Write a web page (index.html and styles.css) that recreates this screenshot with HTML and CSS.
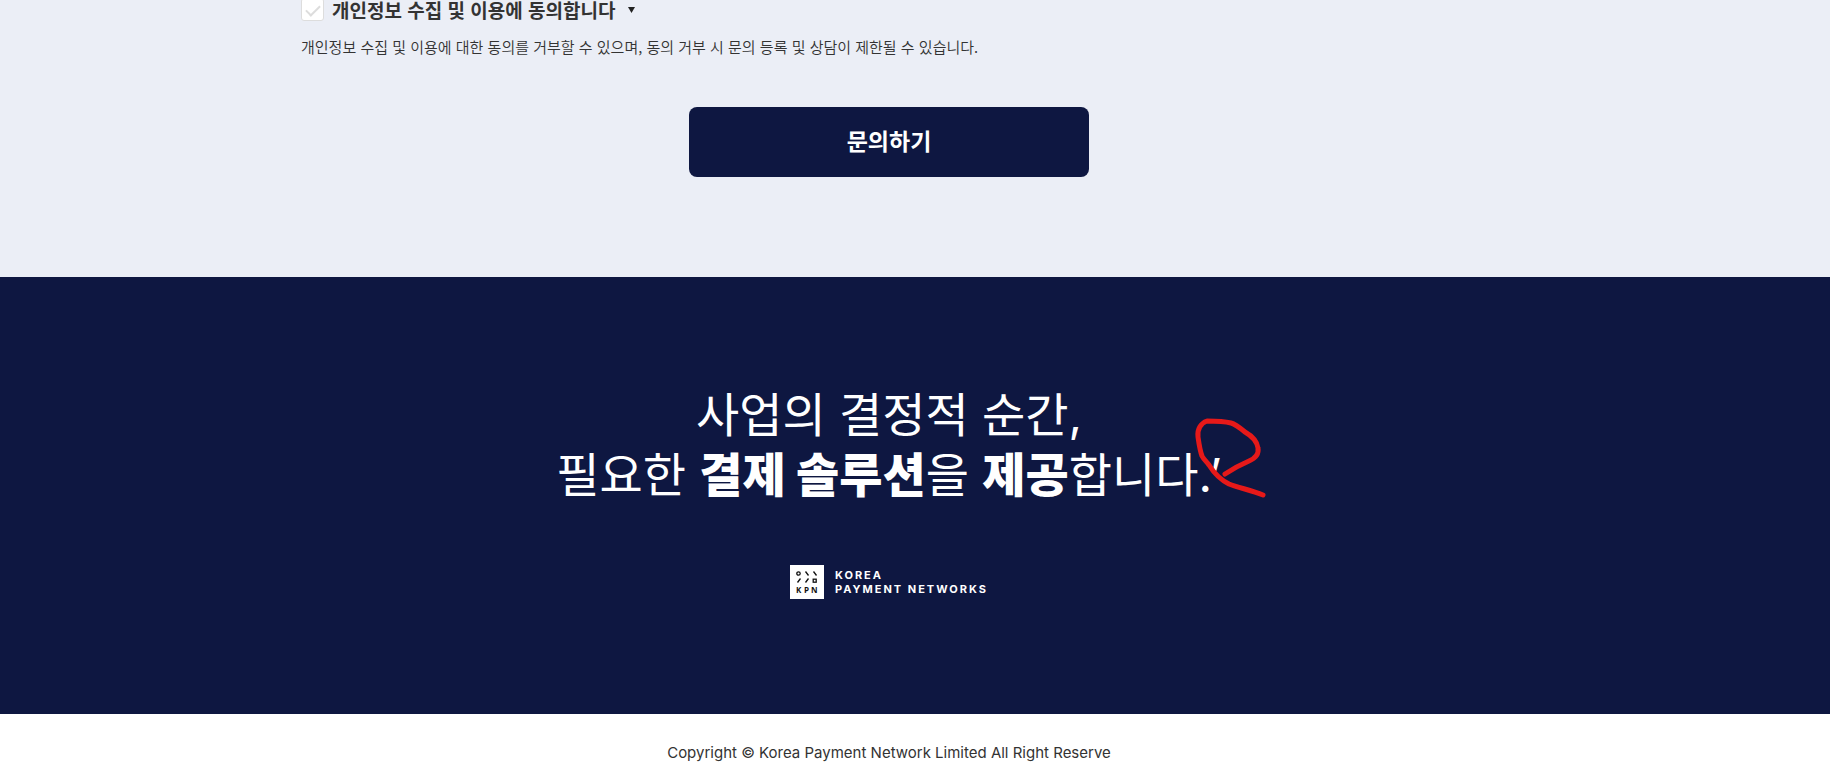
FILE: index.html
```html
<!DOCTYPE html>
<html lang="ko">

<head>
    <meta charset="utf-8">
    <title>Korea Payment Networks</title>
    <meta name="viewport" content="width=device-width, initial-scale=1.0">

    <link rel="stylesheet" href="styles.css">
</head>

<body>
    <section class="inquiry">
        <form class="inquiry-form">
            <div class="agree-row">
                <input type="checkbox" id="agree" class="agree-check">
                <label for="agree" class="agree-label">개인정보 수집 및 이용에 동의합니다</label>
                <button type="button" class="agree-toggle" aria-label="내용 보기">
                    <svg width="7" height="6" viewBox="0 0 7 6"><path d="M0 0h7L3.500 6z" fill="#222"/></svg>
                </button>
            </div>
            <p class="agree-note">개인정보 수집 및 이용에 대한 동의를 거부할 수 있으며, 동의 거부 시 문의 등록 및 상담이 제한될 수 있습니다.</p>
            <button type="submit" class="submit-btn">문의하기</button>
        </form>
    </section>

    <section class="slogan">
        <h2 class="slogan-title">
            사업의 결정적 순간,<br>
            필요한 <strong>결제 솔루션</strong>을 <strong>제공</strong>합니다.<span class="mark">’<svg class="scribble" width="76" height="84" viewBox="0 0 76 84">
                    <path d="M32 58C41 52 49 48 56 45C63 42 66 38 65 32C64 25 59 20 52 16C46 11 42 8 38 7C30 5 22 5 14 5C8 7 4 13 5 21C6 28 7 35 9 40C11 44 14 46 16 49C21 57 26 63 36 68C46 72 58 74 70 79"/>
                </svg>
            </span>
        </h2>

        <a href="#" class="logo">
            <svg width="34" height="34" viewBox="0 0 34 34" aria-hidden="true">
                <rect width="34" height="34" fill="#fff"/>
                <g fill="none" stroke="#111" stroke-width="1.300">
                    <circle cx="8.500" cy="8.500" r="1.700"/>
                    <path d="M15.500 6.500l3 4M23.500 6.500l3 4M10.500 13.500l-3 4M18.500 13.500l-3 4"/>
                    <rect x="23.200" y="14.200" width="3" height="3"/>
                </g>
                <g class="logo-letters">
                    <text x="6" y="28">K</text>
                    <text x="14" y="28">P</text>
                    <text x="21" y="28">N</text>
                </g>
            </svg>
            <span class="logo-name">KOREA<br>PAYMENT NETWORKS</span>
        </a>
    </section>

    <footer class="footer">
        <p>Copyright © Korea Payment Network Limited All Right Reserve</p>
    </footer>
</body>
</html>
```

FILE: styles.css
```css
* {
    box-sizing: border-box;
}

body {
    margin: 0;
    color: #333;
    font-family: "Noto Sans CJK KR", sans-serif;
    background-color: #fff;
}

p,
h2 {
    margin: 0;
}

button {
    border: none;
    cursor: pointer;
    font-family: inherit;
}

.inquiry,
.slogan,
.footer {
    padding-right: 52px;
}

.inquiry {
    padding-bottom: 100px;
    background-color: #ebeef6;
    overflow: hidden;
}

.inquiry-form {
    display: flex;
    flex-direction: column;
    width: 90%;
    max-width: 1176px;
    margin: -2px auto 0;
}

/* agreement */
.agree-row {
    display: flex;
    align-items: center;
    height: 23px;
}

.agree-check {
    appearance: none;
    display: flex;
    justify-content: center;
    width: 23px;
    height: 23px;
    margin: 0 8px 0 0;
    border: 1px solid #ddd;
    border-radius: 3px;
    background-color: #fff;
}

.agree-check::before {
    content: "";
    width: 12px;
    height: 6px;
    margin-top: 6px;
    border-left: 2px solid #ddd;
    border-bottom: 2px solid #ddd;
    transform: rotate(-45deg);
}

.agree-check:checked::before {
    border-color: #0e1741;
}

.agree-label {
    font-size: 19px;
    font-weight: 700;
    line-height: 19px;
}

.agree-toggle {
    display: flex;
    margin-left: 13px;
    padding: 0;
    background: none;
}

.agree-note {
    margin-top: 14px;
    font-size: 15px;
    font-weight: 350;
    line-height: 24px;
}

.submit-btn {
    align-self: center;
    width: 400px;
    max-width: 100%;
    height: 70px;
    margin-top: 48px;
    padding-bottom: 5px;
    border-radius: 8px;
    background-color: #0e1741;
    color: #fff;
    font-size: 23px;
    font-weight: 700;
}

/* slogan */
.slogan {
    display: flex;
    flex-direction: column;
    align-items: center;
    padding-top: 108px;
    padding-bottom: 115px;
    background-color: #0e1741;
    color: #fff;
}

.slogan-title {
    font-family: Inter, "Noto Sans CJK KR", sans-serif;
    font-size: 47px;
    font-weight: 400;
    line-height: 60px;
    text-align: center;
}

.slogan-title strong {
    font-weight: 800;
}

.mark {
    position: relative;
}

.scribble {
    position: absolute;
    top: -30px;
    left: -16px;
    fill: none;
    stroke: #e61919;
    stroke-width: 5;
    stroke-linecap: round;
    stroke-linejoin: round;
}

.logo {
    display: flex;
    align-items: center;
    gap: 11px;
    margin-top: 60px;
    color: #fff;
    text-decoration: none;
}

.logo-letters {
    fill: #111;
    font: 700 8px "Open Sans", sans-serif;
}

.logo-name {
    font: 700 11px/14px Inter, sans-serif;
    letter-spacing: 2px;
}

/* footer */
.footer {
    padding-top: 27px;
    padding-bottom: 10px;
    font-family: Inter, sans-serif;
    font-size: 15px;
    font-weight: 400;
    line-height: 24px;
    text-align: center;
}
```
